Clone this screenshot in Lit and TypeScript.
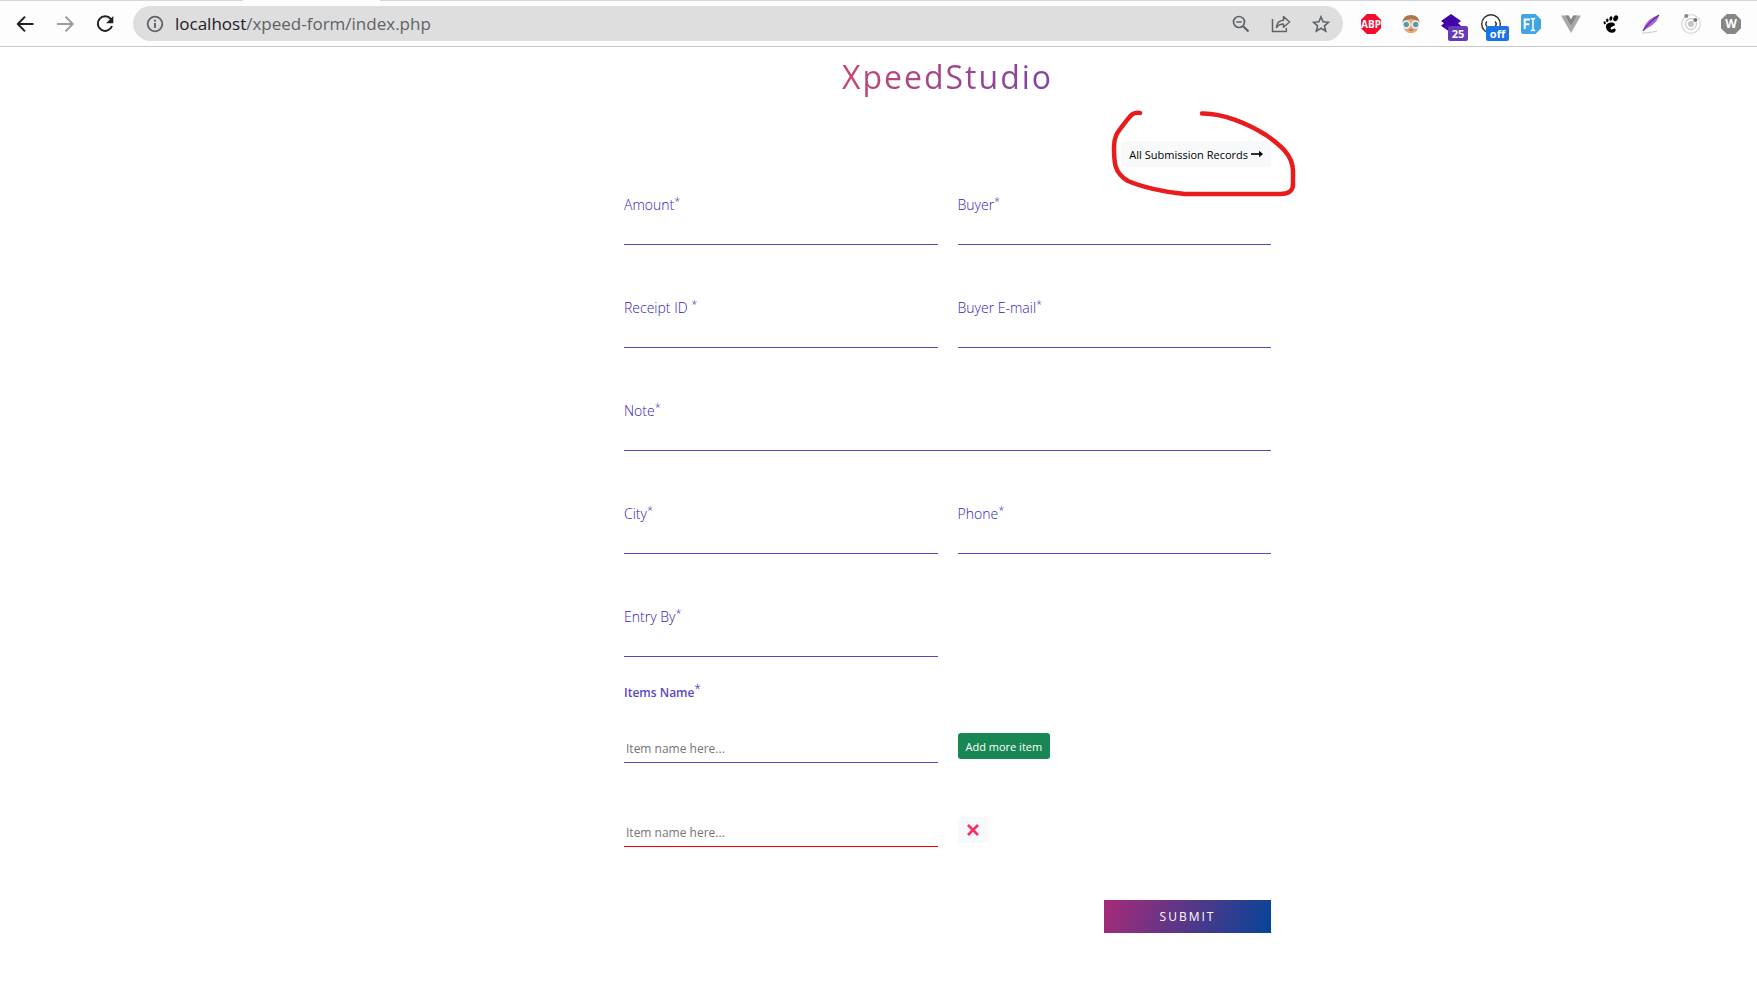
import { LitElement, html, css, svg, TemplateResult } from "lit";
import { customElement } from "lit/decorators.js";

const icon = (size: number, body: TemplateResult) => html`
  <svg width=${size} height=${size} viewBox="0 0 ${size} ${size}" aria-hidden="true">${body}</svg>
`;

const icons = {
  back: icon(20, svg`<path d="M18.500 10H3M10 2.600 2.800 10l7.200 7.400" fill="none" stroke="#202124" stroke-width="2"/>`),
  forward: icon(20, svg`<path d="M2 10h15.500M10.500 2.600l7.200 7.400-7.200 7.400" fill="none" stroke="#9b9b9b" stroke-width="2"/>`),
  reload: icon(20, svg`<path d="M15.800 5A7.300 7.300 0 1 0 17 12" fill="none" stroke="#202124" stroke-width="2"/><path d="M18.300 2v7.200h-7.200z" fill="#202124"/>`),
  info: icon(18, svg`<circle cx="9" cy="9" r="7.300" fill="none" stroke="#5f6368" stroke-width="1.800"/><path d="M9 8v5M9 4.800v1.900" stroke="#5f6368" stroke-width="1.900"/>`),
  zoomOut: icon(18, svg`<circle cx="7" cy="7" r="5.500" fill="none" stroke="#5f6368" stroke-width="1.700"/><path d="m11 11 5.500 5.500" stroke="#5f6368" stroke-width="2.200"/><path d="M4.300 7h5.400" stroke="#5f6368" stroke-width="1.500"/>`),
  share: icon(20, svg`<path d="M1.500 5v12.500h13.800V14M5.500 13.500c.3-5 2.800-7 7-7.300V2.600L18.600 8l-6.100 5.300V9.900c-3.200 0-5.200 1-7 3.600z" fill="none" stroke="#5f6368" stroke-width="1.500" stroke-linejoin="round"/>`),
  star: icon(18, svg`<path d="m9 1.800 2.100 5 5.400.5-4.100 3.500 1.300 5.300L9 13.300l-4.700 2.800 1.300-5.300-4.100-3.500 5.400-.5z" fill="none" stroke="#5f6368" stroke-width="1.600"/>`),
  abp: icon(22, svg`<path d="M6.800 1h8.400L21 6.800v8.400L15.200 21H6.800L1 15.200V6.800z" fill="#f40d30"/><text x="11" y="14.800" text-anchor="middle" font-size="10" font-weight="700" fill="#fff">ABP</text>`),
  face: icon(20, svg`<ellipse cx="10" cy="10.500" rx="8" ry="8.800" fill="#e3a87c"/><path d="M1.600 10C1 4 5 1 10 1s9 3 8.400 9c-3-3.800-5.400-5-8.400-5S4.600 6.200 1.600 10z" fill="#a9774f"/><circle cx="5.300" cy="10.500" r="3.500" fill="#5d98a8" stroke="#eef6f7" stroke-width="1.600"/><circle cx="14.700" cy="10.500" r="3.500" fill="#5d98a8" stroke="#eef6f7" stroke-width="1.600"/><path d="M8 16h4" stroke="#b4603f" stroke-width="1.200"/>`),
  layers: icon(22, svg`<path d="m11 1 10 7-3 2.200 3 2.600-10 7-10-7 3-2.600L1 8z" fill="#4206a8"/>`),
  smile: icon(22, svg`<circle cx="11" cy="11" r="9.300" fill="#fff" stroke="#333" stroke-width="1.400"/><path d="M7 8.500c-1.500 1.500-1.500 3.500 0 5M15 8.500c1.500 1.500 1.500 3.500 0 5" fill="none" stroke="#333" stroke-width="1.500"/>`),
  fonts: icon(22, svg`<path d="M3 1h12.500L21 6.500v9L15.500 21H3a2 2 0 0 1-2-2V3a2 2 0 0 1 2-2z" fill="#42a5e3"/><path d="M4.700 16V6.500h5.300M4.700 11.200h4.500" fill="none" stroke="#fff" stroke-width="2"/><path d="M10.800 5.500c1.500 0 2.200.5 2.200 1.300 0-.8.700-1.300 2.200-1.300M13 6.500v10M10.800 17.500c1.500 0 2.200-.5 2.200-1.300 0 .8.700 1.300 2.200 1.300" fill="none" stroke="#fff" stroke-width="1.500"/>`),
  vue: icon(20, svg`<path d="M0 1.500h7.500L10 6l2.500-4.500H20L10 19z" fill="#a9a9a9"/><path d="M4.300 1.500h3.400L10 5.500l2.300-4h3.400L10 11.600z" fill="#858585"/>`),
  gnome: icon(20, svg`<g fill="#000"><ellipse cx="14.700" cy="4.200" rx="2.300" ry="3.100" transform="rotate(25 14.700 4.200)"/><ellipse cx="9.900" cy="4.500" rx="1.500" ry="2.200" transform="rotate(12 9.900 4.500)"/><ellipse cx="6.300" cy="6.300" rx="1.200" ry="1.900"/><ellipse cx="3.700" cy="8.800" rx="1.100" ry="1.600" transform="rotate(-15 3.700 8.800)"/><path d="M10.500 8.400c-4 0-6.300 2.200-5.400 5.700.8 3.200 3.700 5 6.500 4.700 3-.4 3.800-3 2.500-4-1.500-1-2.700 1.600-4.200.4-1.200-1 .7-2.500 2.600-3.200 2.600-1 1.600-3.600-2-3.600z"/></g>`),
  feather: icon(20, svg`<path d="M2 17C3 10 9 3.500 18 1c-.5 4-3.500 8-8 11-3 1.800-5.500 3-8 5z" fill="#a866d8"/><path d="M2 17C6 11 11 6 18 1" fill="none" stroke="#5e2b91" stroke-width="1.200"/><path d="M1 19c5-.2 10-.6 15-2" fill="none" stroke="#c9c9c9"/>`),
  orbit: icon(22, svg`<circle cx="11" cy="11" r="9.300" fill="none" stroke="#dadada" stroke-width="1.300"/><circle cx="11" cy="11" r="5.500" fill="none" stroke="#cfcfcf" stroke-width="1.300"/><circle cx="11" cy="11" r="3" fill="#c4c4c4"/><circle cx="6.300" cy="3" r="2" fill="#888"/><circle cx="15.300" cy="7" r="2" fill="#777"/>`),
  w: icon(22, svg`<path d="M6.800 1h8.400L21 6.800v8.400L15.200 21H6.800L1 15.200V6.800z" fill="#868686"/><text x="11" y="15" text-anchor="middle" font-size="12" font-weight="700" fill="#fff">W</text>`),
  arrow: icon(12, svg`<path d="M0 6h9" stroke="#000" stroke-width="1.600"/><path d="M8 2.800 12 6 8 9.200z" fill="#000"/>`),
  cross: icon(12, svg`<path d="m1 1 10 10M11 1 1 11" stroke="#f92f60" stroke-width="2.700"/>`),
};

@customElement("browser-toolbar")
class BrowserToolbar extends LitElement {
  static styles = css`
    :host { display: block; background: #fdfdfd; border-bottom: 1px solid #c8c8c8; }
    .tabs { display: grid; grid-template-columns: 243px 137px 1fr; height: 1px; }
    .edge { background: #d6d6d6; }
    .bar { display: flex; align-items: center; height: 45px; padding: 0 6px 0 5px; }
    button { display: grid; place-items: center; flex: none; position: relative; width: 40px; height: 40px; padding: 0; border: 0; background: none; font: inherit; }
    .address { display: flex; align-items: center; flex: 1; min-width: 0; height: 35px; margin: 0 8px; padding: 0 2px 0 13px; border-radius: 18px; background: #dedede; box-sizing: border-box; }
    .url { flex: 1; min-width: 0; margin-left: 11px; font-size: 17px; line-height: 24px; color: #5f6368; white-space: nowrap; overflow: hidden; }
    .host { color: #202124; }
    .badge { position: absolute; left: 17px; top: 22px; min-width: 20px; height: 15px; border-radius: 2px; background: #673ab7; color: #fff; font-size: 11px; font-weight: 700; line-height: 15px; text-align: center; }
    .off { left: 15px; min-width: 23px; background: #1a73e8; }
  `;

  private extensions: { name: string; glyph: TemplateResult; badge?: string; off?: boolean }[] = [
    { name: "Adblock Plus", glyph: icons.abp },
    { name: "Profile", glyph: icons.face },
    { name: "Layers", glyph: icons.layers, badge: "25" },
    { name: "Smile", glyph: icons.smile, badge: "off", off: true },
    { name: "Fonts", glyph: icons.fonts },
    { name: "Vue", glyph: icons.vue },
    { name: "Gnome", glyph: icons.gnome },
    { name: "Feather", glyph: icons.feather },
    { name: "Orbit", glyph: icons.orbit },
    { name: "Wappalyzer", glyph: icons.w },
  ];

  render() {
    return html`
      <div class="tabs"><span class="edge"></span><span></span><span class="edge"></span></div>
      <nav class="bar">
        <button aria-label="Back">${icons.back}</button>
        <button aria-label="Forward">${icons.forward}</button>
        <button aria-label="Reload">${icons.reload}</button>
        <div class="address">
          ${icons.info}
          <span class="url"><span class="host">localhost</span>/xpeed-form/index.php</span>
          <button aria-label="Zoom out">${icons.zoomOut}</button>
          <button aria-label="Share">${icons.share}</button>
          <button aria-label="Bookmark">${icons.star}</button>
        </div>
        ${this.extensions.map((e) => html`
          <button aria-label=${e.name}>
            ${e.glyph}
            ${e.badge ? html`<span class="badge ${e.off ? "off" : ""}">${e.badge}</span>` : null}
          </button>`)}
      </nav>
    `;
  }
}

@customElement("form-field")
class FormField extends LitElement {
  static properties = { label: {}, name: {} };
  declare label: string;
  declare name: string;

  static styles = css`
    :host { display: block; min-width: 0; }
    label { display: block; height: 24px; color: #3519b8; font-size: 14px; font-weight: 300; line-height: 23px; white-space: pre; }
    sup { font-size: 11px; line-height: 0; vertical-align: 5px; }
    input { display: block; width: 100%; height: 28px; box-sizing: border-box; padding: 1px 2px; border: 0; border-bottom: 1px solid #5b45c9; outline: 0; background: none; font: inherit; font-size: 12px; }
  `;

  render() {
    return html`
      <label for=${this.name}>${this.label}<sup>*</sup></label>
      <input id=${this.name} name=${this.name} type="text" />
    `;
  }
}

@customElement("app-root")
class AppRoot extends LitElement {
  static styles = css`
    :host { display: block; min-height: 100vh; background: #fff; font-family: "Open Sans", "Noto Sans", sans-serif; color: #000; }
    main { padding: 8px 0 40px 138px; }
    form { display: flex; flex-direction: column; max-width: 647px; margin: 0 auto; }
    h1 { align-self: center; margin: 0; font-size: 32px; font-weight: 400; line-height: 44px; letter-spacing: 2px; color: transparent; background: linear-gradient(90deg, #c8466f, #7d44a8); -webkit-background-clip: text; background-clip: text; }
    .records { position: relative; align-self: flex-end; margin-top: 42px; }
    .link { display: flex; align-items: center; gap: 3px; height: 26px; padding: 0 8px; border-radius: 3px; background: #f8f9fa; color: #000; font-size: 11px; text-decoration: none; white-space: nowrap; }
    .ink { position: absolute; right: -29px; top: -36px; pointer-events: none; }
    .fields { display: grid; grid-template-columns: 1fr 1fr; gap: 51px 20px; margin-top: 26px; }
    .wide { grid-column: 1 / -1; }
    .first { grid-column: 1; }
    .items { margin: 26px 0 0; color: #5b45c9; font-size: 12px; font-weight: 600; line-height: 20px; }
    sup { font-size: 11px; font-weight: 400; line-height: 0; vertical-align: 5px; }
    .rows { display: grid; gap: 54px; margin-top: 30px; }
    .row { display: grid; grid-template-columns: 1fr 1fr; column-gap: 20px; align-items: start; justify-items: start; }
    input { display: block; width: 100%; height: 30px; box-sizing: border-box; padding: 2px 2px 0; border: 0; border-bottom: 1px solid #5b45c9; outline: 0; background: none; font: inherit; font-size: 12px; }
    input::placeholder { color: #757575; }
    .invalid { border-bottom-color: #f00; }
    button { font: inherit; border: 0; border-radius: 3px; }
    .add { height: 26px; padding: 0 8px; background: #198754; color: #fff; font-size: 11px; }
    .remove { display: grid; place-items: center; width: 31px; height: 26px; padding: 0; background: #f8f9fa; }
    .submit { align-self: flex-end; width: 167px; height: 33px; margin-top: 53px; border-radius: 0; background: linear-gradient(110deg, #a82a78, #054499); color: #fff; font-size: 12px; letter-spacing: 2px; }
  `;

  render() {
    return html`
      <browser-toolbar></browser-toolbar>
      <main>
        <form @submit=${(e: Event) => e.preventDefault()}>
          <h1>XpeedStudio</h1>
          <div class="records">
            <a class="link" href="#records">All Submission Records ${icons.arrow}</a>
            <svg class="ink" width="190" height="92" viewBox="0 0 190 92" aria-hidden="true">
              <path d="M30 8C23 7 21 10 17 15C9 26 4 29 4 42C4 57 4 68 18 76C32 82 56 87 75 89H170C179 89 183 86 183 79V66C183 50 170 40 156 30C138 19 113 8 92 8.500" fill="none" stroke="#e81c1c" stroke-width="4.500" stroke-linecap="round" />
            </svg>
          </div>
          <div class="fields">
            <form-field label="Amount" name="amount"></form-field>
            <form-field label="Buyer" name="buyer"></form-field>
            <form-field label="Receipt ID " name="receipt_id"></form-field>
            <form-field label="Buyer E-mail" name="buyer_email"></form-field>
            <form-field class="wide" label="Note" name="note"></form-field>
            <form-field label="City" name="city"></form-field>
            <form-field label="Phone" name="phone"></form-field>
            <form-field class="first" label="Entry By" name="entry_by"></form-field>
          </div>
          <label class="items" for="item-1">Items Name<sup>*</sup></label>
          <div class="rows">
            <div class="row">
              <input id="item-1" type="text" placeholder="Item name here..." />
              <button class="add" type="button">Add more item</button>
            </div>
            <div class="row">
              <input class="invalid" type="text" aria-label="Item name" placeholder="Item name here..." />
              <button class="remove" type="button" aria-label="Remove item">${icons.cross}</button>
            </div>
          </div>
          <button class="submit" type="submit">SUBMIT</button>
        </form>
      </main>
    `;
  }
}
